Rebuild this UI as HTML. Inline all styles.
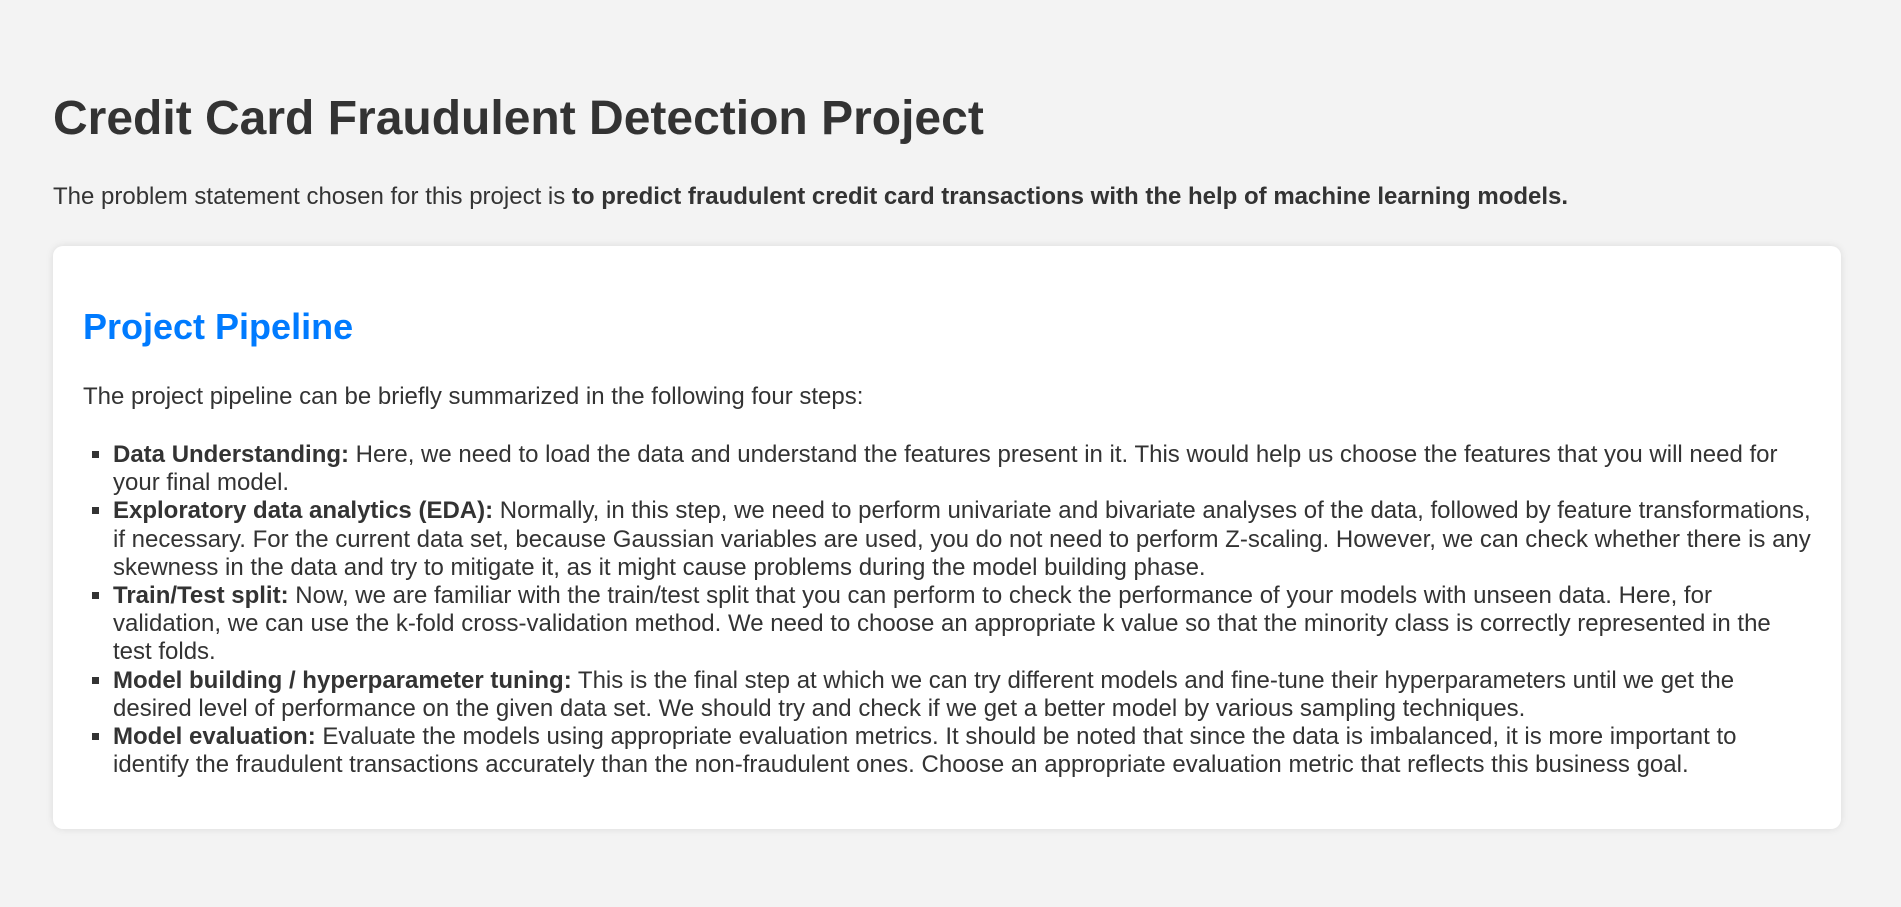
<!DOCTYPE html>
<html><head><meta charset="utf-8"><style>
html,body{margin:0;padding:0;background:#f3f3f3;}
body{font-family:"Liberation Sans",Arial,sans-serif;color:#333;font-size:24px;line-height:28px;width:1901px;height:907px;overflow:hidden;}
h1{font-size:48px;line-height:56px;margin:0;position:absolute;top:91px;left:53px;font-weight:bold;}
p.lead{position:absolute;top:183px;left:53px;margin:0;}
.card{position:absolute;left:53px;top:246px;width:1728px;height:523px;background:#fff;border-radius:10px;box-shadow:0 0 8px rgba(0,0,0,0.1);padding:30px 30px;}
h2{color:#007bff;font-size:36px;line-height:40px;margin:31px 0 0;font-weight:bold;}
.card p{margin:36px 0 0;}
ul{list-style:square;margin:30px 0 0;padding-left:30px;}
li{margin:0;line-height:28.2px;}
</style></head><body>
<h1>Credit Card Fraudulent Detection Project</h1>
<p class="lead">The problem statement chosen for this project is <b>to predict fraudulent credit card transactions with the help of machine learning models.</b></p>
<div class="card">
<h2>Project Pipeline</h2>
<p>The project pipeline can be briefly summarized in the following four steps:</p>
<ul>
<li><b>Data Understanding:</b> Here, we need to load the data and understand the features present in it. This would help us choose the features that you will need for your final model.</li>
<li><b>Exploratory data analytics (EDA):</b> Normally, in this step, we need to perform univariate and bivariate analyses of the data, followed by feature transformations, if necessary. For the current data set, because Gaussian variables are used, you do not need to perform Z-scaling. However, we can check whether there is any skewness in the data and try to mitigate it, as it might cause problems during the model building phase.</li>
<li><b>Train/Test split:</b> Now, we are familiar with the train/test split that you can perform to check the performance of your models with unseen data. Here, for validation, we can use the k-fold cross-validation method. We need to choose an appropriate k value so that the minority class is correctly represented in the test folds.</li>
<li><b>Model building / hyperparameter tuning:</b> This is the final step at which we can try different models and fine-tune their hyperparameters until we get the desired level of performance on the given data set. We should try and check if we get a better model by various sampling techniques.</li>
<li><b>Model evaluation:</b> Evaluate the models using appropriate evaluation metrics. It should be noted that since the data is imbalanced, it is more important to identify the fraudulent transactions accurately than the non-fraudulent ones. Choose an appropriate evaluation metric that reflects this business goal.</li>
</ul>
</div>
</body></html>
